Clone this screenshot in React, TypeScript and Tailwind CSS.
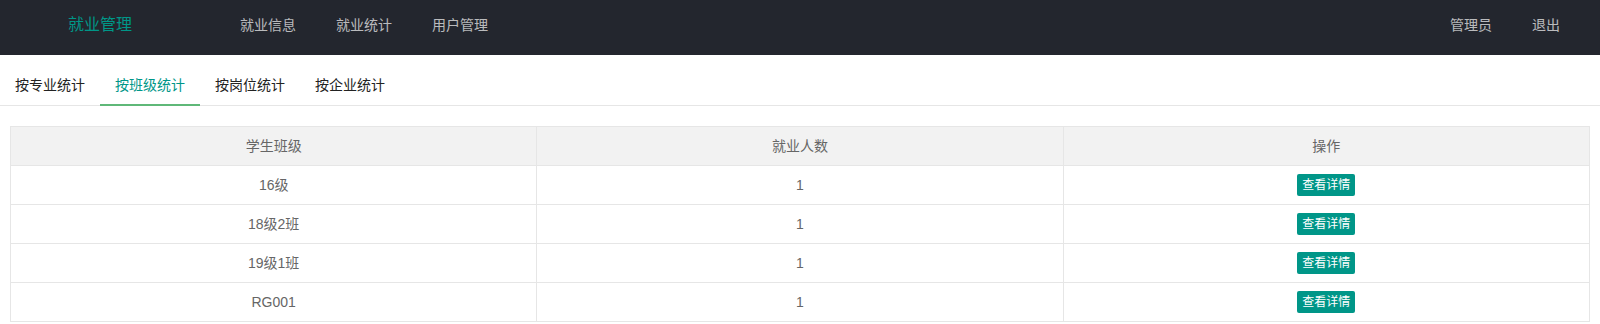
import React from "react";

const rows = [
  { name: "16级", count: 1 },
  { name: "18级2班", count: 1 },
  { name: "19级1班", count: 1 },
  { name: "RG001", count: 1 },
];

const tabs = ["按专业统计", "按班级统计", "按岗位统计", "按企业统计"];

export default function App() {
  return (
    <div
      className="min-h-[324px] bg-white text-[14px] text-[#333]"
      style={{ fontFamily: '"Liberation Sans", "Noto Sans CJK SC", sans-serif' }}
    >
      {/* Top bar */}
      <div className="flex h-[55px] bg-[#23262E]">
        <div className="flex h-[50px] w-[200px] items-center justify-center text-[16px] text-[#009688]">
          就业管理
        </div>
        <ul className="ml-[20px] flex h-[50px]">
          {["就业信息", "就业统计", "用户管理"].map((t) => (
            <li key={t} className="flex items-center px-[20px] text-[rgba(255,255,255,0.7)]">
              {t}
            </li>
          ))}
        </ul>
        <ul className="ml-auto mr-[20px] flex h-[50px]">
          {["管理员", "退出"].map((t) => (
            <li key={t} className="flex items-center px-[20px] text-[rgba(255,255,255,0.7)]">
              {t}
            </li>
          ))}
        </ul>
      </div>

      {/* Tabs */}
      <div className="mt-[10px]">
        <ul className="flex h-[41px] border-b border-[#e6e6e6]">
          {tabs.map((t, i) => (
            <li
              key={t}
              className={`flex h-[41px] min-w-[65px] items-center px-[15px] ${
                i === 1 ? "border-b-2 border-[#5FB878] text-[#009688]" : "text-[#222]"
              }`}
            >
              <span className={i === 1 ? "mt-[2px]" : ""}>{t}</span>
            </li>
          ))}
        </ul>

        {/* Table */}
        <div className="px-[10px] pt-[20px]">
          <table className="w-full table-fixed border-collapse text-[14px] text-[#666]">
            <thead>
              <tr className="bg-[#f2f2f2]">
                {["学生班级", "就业人数", "操作"].map((h) => (
                  <th
                    key={h}
                    className="h-[39px] border border-[#e6e6e6] px-[15px] text-center font-normal"
                  >
                    {h}
                  </th>
                ))}
              </tr>
            </thead>
            <tbody>
              {rows.map((r) => (
                <tr key={r.name}>
                  <td className="h-[39px] border border-[#e6e6e6] px-[15px] text-center">{r.name}</td>
                  <td className="h-[39px] border border-[#e6e6e6] px-[15px] text-center">{r.count}</td>
                  <td className="h-[39px] border border-[#e6e6e6] px-[15px] text-center">
                    <span className="inline-flex h-[22px] items-center rounded-[2px] bg-[#009688] px-[5px] align-middle text-[12px] text-white">
                      查看详情
                    </span>
                  </td>
                </tr>
              ))}
            </tbody>
          </table>
        </div>
      </div>
    </div>
  );
}
